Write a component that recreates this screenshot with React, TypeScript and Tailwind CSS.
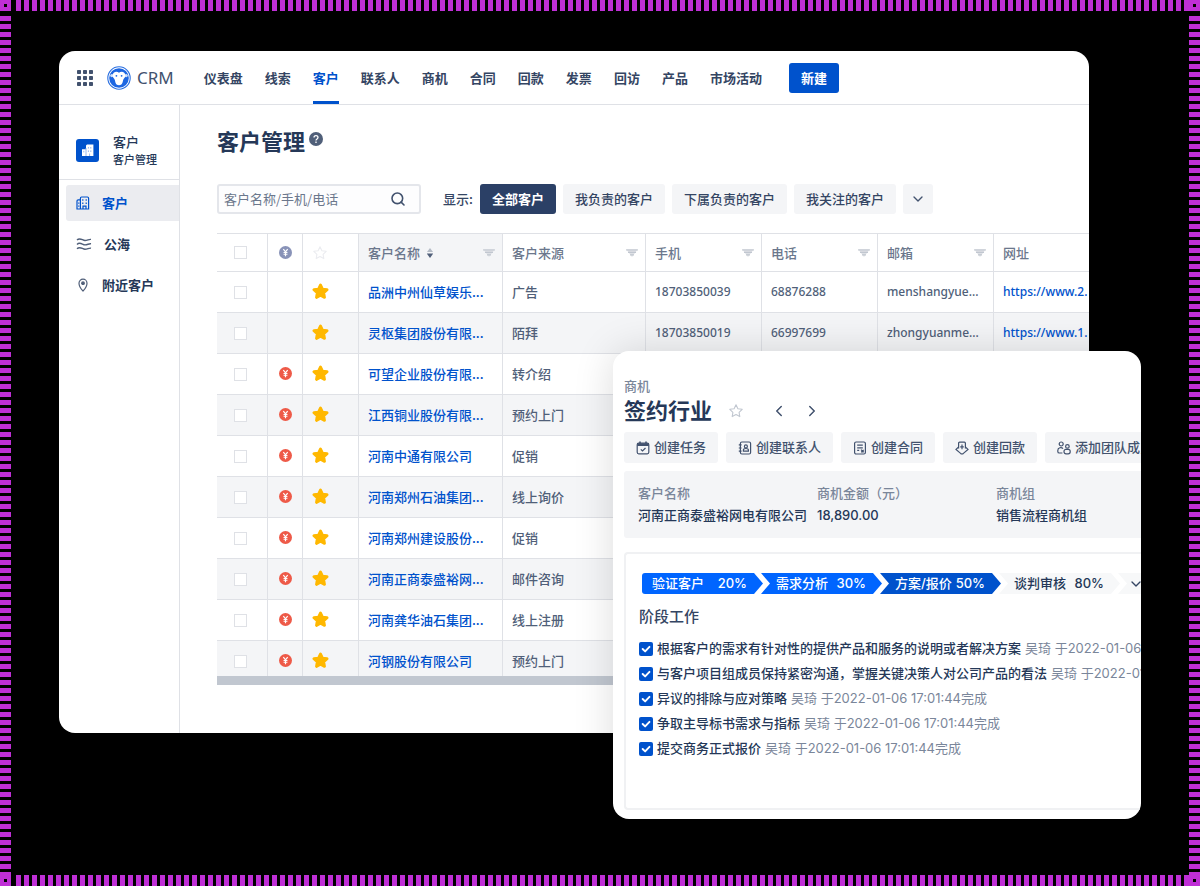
import React from "react";
import { ChevronDown, ChevronLeft, ChevronRight, Search } from "lucide-react";
import clsx from "clsx";

const navItems = ["仪表盘", "线索", "客户", "联系人", "商机", "合同", "回款", "发票", "回访", "产品", "市场活动"];

const filters = ["全部客户", "我负责的客户", "下属负责的客户", "我关注的客户"];

const customers = [
  { name: "品洲中州仙草娱乐...", source: "广告", paid: false, mobile: "18703850039", phone: "68876288", mail: "menshangyue...", site: "https://www.2." },
  { name: "灵枢集团股份有限...", source: "陌拜", paid: false, mobile: "18703850019", phone: "66997699", mail: "zhongyuanme...", site: "https://www.1." },
  { name: "可望企业股份有限...", source: "转介绍", paid: true },
  { name: "江西铜业股份有限...", source: "预约上门", paid: true },
  { name: "河南中通有限公司", source: "促销", paid: true },
  { name: "河南郑州石油集团...", source: "线上询价", paid: true },
  { name: "河南郑州建设股份...", source: "促销", paid: true },
  { name: "河南正商泰盛裕网...", source: "邮件咨询", paid: true },
  { name: "河南龚华油石集团...", source: "线上注册", paid: true },
  { name: "河钢股份有限公司", source: "预约上门", paid: true },
];

const stages = [
  { label: "验证客户", percent: "20%", className: "bg-[#0065ff] text-white" },
  { label: "需求分析", percent: "30%", className: "bg-[#0065ff] text-white" },
  { label: "方案/报价", percent: "50%", className: "bg-[#0052cc] text-white" },
  { label: "谈判审核", percent: "80%", className: "bg-[#f7f8f9] text-[#253858]" },
];

const tasks = [
  "根据客户的需求有针对性的提供产品和服务的说明或者解决方案",
  "与客户项目组成员保持紧密沟通，掌握关键决策人对公司产品的看法",
  "异议的排除与应对策略",
  "争取主导标书需求与指标",
  "提交商务正式报价",
];

const STAR = "M8 1.8l1.9 3.9 4.3.6-3.1 3 .7 4.3L8 11.6l-3.8 2 .7-4.3-3.1-3 4.3-.6z";

const Star: React.FC<{ filled?: boolean; className?: string }> = ({ filled, className }) => (
  <svg viewBox="0 0 16 16" className={clsx(filled ? "size-[17px]" : "size-4", className)}>
    <path
      d={STAR}
      fill={filled ? "#ffb800" : "none"}
      stroke={filled ? "#ffb800" : "currentColor"}
      strokeWidth={filled ? 2.6 : 1.1}
      strokeLinejoin="round"
    />
  </svg>
);

const YenBadge: React.FC<{ className?: string }> = ({ className }) => (
  <svg viewBox="0 0 12 12" className={clsx("size-[13px]", className)}>
    <circle cx="6" cy="6" r="6" fill="currentColor" />
    <path d="M4 2.8l2 2.6 2-2.6M6 5.4v4M4.2 6h3.6M4.2 7.6h3.6" fill="none" stroke="#fff" strokeWidth="1.1" />
  </svg>
);

const FilterIcon = () => (
  <svg viewBox="0 0 12 8" className="h-2 w-3">
    <path d="M0 0h12L6 8z" fill="#dfe1e6" />
    <path d="M0 1h12M2 3.4h8M4 5.8h4" stroke="#c1c7d0" strokeWidth="1.2" />
  </svg>
);

const SortIcon = () => (
  <svg viewBox="0 0 8 10" className="h-[10px] w-2">
    <path d="M4 0l3 4H1z" fill="#b3bac5" />
    <path d="M4 10l3.2-4.4H.8z" fill="#505f79" />
  </svg>
);

const Building: React.FC<{ solid?: boolean }> = ({ solid }) =>
  solid ? (
    <svg viewBox="0 0 12 12" className="size-3">
      <path d="M0 5.2h4V1.6L5 .4h6.400V12H0z" fill="#fff" />
      <path d="M4 4v8M6.4 3v1.6M8.8 3v1.6M6.4 6.4V8M8.8 6.4V8M1.8 6.8v1.6M7.6 9.6V12" stroke="#8db0ec" strokeWidth=".9" />
    </svg>
  ) : (
    <svg viewBox="0 0 14 14" className="size-[14px]" fill="none" stroke="currentColor" strokeWidth="1.2">
      <path d="M4.4 13V2.2c0-.7.4-1.200 1.200-1.200h5.800c.8 0 1.200.5 1.200 1.200V13zM4.4 3.8H2.200C1.400 3.800 1 4.300 1 5v8h3.400" />
      <path d="M6.8 3.2v1.6M10.2 3.2v1.6M6.8 6.4V8M10.2 6.4V8M2.8 6.4v1.4M2.8 9.4v1.4M7 13v-2.8h3V13" />
    </svg>
  );

const Logo = () => (
  <svg viewBox="0 0 24 24" className="size-6">
    <circle cx="12" cy="12" r="11.2" fill="#fff" stroke="#2a6fe0" strokeWidth="1.1" />
    <circle cx="12" cy="12" r="9.8" fill="#1c66e2" />
    <circle cx="4.8" cy="9.6" r="1.600" fill="#cfe0fb" />
    <circle cx="19.2" cy="9.6" r="1.600" fill="#cfe0fb" />
    <path
      d="M12 6.800c2-2.200 6.400-1.200 6.400 2.800 0 2.200-1.900 2.900-2.300 4.600-.5 2-.8 5-4.100 5s-3.600-3-4.100-5c-.4-1.700-2.300-2.400-2.300-4.600 0-4 4.400-5 6.400-2.800z"
      fill="#fff"
    />
    <circle cx="9.400" cy="9.800" r=".9" fill="#1c66e2" />
    <circle cx="14.600" cy="9.800" r=".9" fill="#1c66e2" />
  </svg>
);

const iconProps = {
  viewBox: "0 0 14 14",
  className: "size-[14px] shrink-0",
  fill: "none",
  stroke: "currentColor",
  strokeWidth: 1.2,
};

const actions = [
  {
    label: "创建任务",
    icon: (
      <svg {...iconProps}>
        <rect x="1.200" y="2.200" width="11.600" height="10.600" rx="1.500" />
        <path d="M1.200 3.600h11.600" strokeWidth="2.800" />
        <path d="M4 .6v2M10 .6v2" strokeWidth="1.600" />
        <path d="M4.800 8.400l1.700 1.600 3-3" />
      </svg>
    ),
  },
  {
    label: "创建联系人",
    icon: (
      <svg {...iconProps}>
        <rect x="2.400" y="1" width="10.200" height="12" rx="1.500" />
        <path d="M.8 3.800h2.800M.8 7h2.800M.8 10.200h2.800" />
        <circle cx="7.900" cy="5.400" r="1.500" />
        <path d="M5.400 10.200V9c0-2 5-2 5 0v1.200z" />
      </svg>
    ),
  },
  {
    label: "创建合同",
    icon: (
      <svg {...iconProps}>
        <rect x="1.600" y="1" width="10.800" height="12" rx="1.500" />
        <path d="M4.200 4.200h5.600M4.200 6.800h5.600M4.200 9.400h2M8 8.600l2.200 2.200M10.200 8.800v2H8" />
      </svg>
    ),
  },
  {
    label: "创建回款",
    icon: (
      <svg {...iconProps}>
        <path d="M3.600 7.600V2.200c0-.6.4-1 1-1h4.800c.6 0 1 .4 1 1v5.400" />
        <path d="M3.600 6L1 8.400l4.600 4c.8.600 2 .600 2.800 0l4.600-4L10.400 6M7 3.600v4.600M5.200 5.800h3.600" />
      </svg>
    ),
  },
  {
    label: "添加团队成员",
    icon: (
      <svg {...iconProps}>
        <circle cx="4.200" cy="3" r="2" />
        <circle cx="10.400" cy="5.400" r="1.800" />
        <path d="M5.400 12H2.400C1.400 12 .8 11.400.8 10.400V9.400C.8 6.400 4.600 6 6 7.600" />
        <rect x="7" y="8.400" width="6.200" height="4.400" rx="2" />
      </svg>
    ),
  },
];

const Corner = () => (
  <div className="flex size-[11px] items-center justify-center bg-[#bf2fd6]">
    <div className="size-[3px] bg-black" />
  </div>
);

const HorizontalStripes = () => (
  <div className="flex h-[11px]">
    <Corner />
    <div className="ml-[5px] flex-1 bg-[repeating-linear-gradient(90deg,#bf2fd6_0px_5px,#000_5px_8px)]" />
    <Corner />
  </div>
);

const VerticalStripes = () => (
  <div className="mt-[5px] w-[11px] bg-[repeating-linear-gradient(180deg,#bf2fd6_0px_5px,#000_5px_8px)]" />
);

const Header = () => (
  <header className="flex h-[54px] items-center border-b border-[#dfe1e6] pl-[18px]">
    <button aria-label="应用" className="text-[#42526e]">
      <svg viewBox="0 0 16 16" className="size-4" fill="currentColor">
        {[0, 6, 12].map((y) => [0, 6, 12].map((x) => <rect key={`${x}-${y}`} x={x} y={y} width="4" height="4" rx=".8" />))}
      </svg>
    </button>
    <div className="ml-[14px] flex items-center gap-[6px]">
      <Logo />
      <span className="font-['Noto_Sans',sans-serif] text-[17px] text-[#42526e]">CRM</span>
    </div>
    <nav className="ml-[30px] flex gap-[22px] self-stretch">
      {navItems.map((item) => (
        <a
          key={item}
          href="#"
          className={clsx(
            "flex items-center border-b-[3px] pt-1 font-bold",
            item === "客户" ? "border-[#0052cc] text-[#0052cc]" : "border-transparent text-[#344563]"
          )}
        >
          {item}
        </a>
      ))}
    </nav>
    <button className="ml-[27px] h-[30px] rounded-[3px] bg-[#0052cc] px-3 font-bold text-white">新建</button>
  </header>
);

const Sidebar = () => (
  <aside className="w-[121px] shrink-0 border-r border-[#dfe1e6] font-medium text-[#253858]">
    <div className="flex items-center gap-[14px] border-b border-[#dfe1e6] pt-7 pb-3 pl-[17px]">
      <span className="flex size-[23px] items-center justify-center rounded-[3px] bg-[#0052cc]">
        <Building solid />
      </span>
      <div>
        <p className="leading-[18px]">客户</p>
        <p className="text-[11px] leading-4">客户管理</p>
      </div>
    </div>
    <nav className="mt-[5px] flex flex-col gap-[5px] pl-[7px] font-bold">
      <a href="#" className="flex h-9 items-center gap-3 rounded-l-[3px] bg-[#ebecf0] pl-[10px] text-[#0052cc]">
        <Building />
        客户
      </a>
      <a href="#" className="flex h-9 items-center gap-3 pl-[10px]">
        <svg viewBox="0 0 16 14" className="h-[14px] w-4 text-[#505f79]" fill="none" stroke="currentColor" strokeWidth="1.4">
          <path d="M1 3c3-3 5.500.5 8 .5S13 2 15 2.400M1 7.400c3-3 5.500.5 8 .5s4-1.500 6-1.100M1 11.800c3-3 5.500.5 8 .5s4-1.500 6-1.100" />
        </svg>
        公海
      </a>
      <a href="#" className="flex h-9 items-center gap-3 pl-[10px]">
        <svg viewBox="0 0 14 14" className="size-[14px] text-[#505f79]" fill="none" stroke="currentColor" strokeWidth="1.2">
          <path d="M7 13C4.600 10.600 3 8 3 5.200a4 4 0 018 0C11 8 9.400 10.600 7 13z" />
          <circle cx="7" cy="5.200" r="1.300" fill="currentColor" />
        </svg>
        附近客户
      </a>
    </nav>
  </aside>
);

const Toolbar = () => (
  <div className="mt-[29px] flex items-center">
    <label className="flex h-[30px] w-[204px] items-center rounded-[3px] border-2 border-[#e4e6eb] bg-[#fdfdfe] pr-[13px] pl-[5px]">
      <input
        aria-label="搜索客户"
        placeholder="客户名称/手机/电话"
        className="min-w-0 flex-1 bg-transparent outline-none placeholder:text-[#6b778c]"
      />
      <Search className="size-4 text-[#42526e]" strokeWidth={2.4} />
    </label>
    <span className="mr-[7px] ml-[22px] font-medium text-[#344563]">显示:</span>
    <div className="flex gap-[7px]">
      {filters.map((filter, i) => (
        <button
          key={filter}
          className={clsx(
            "h-[30px] rounded-[3px] px-3",
            i === 0 ? "bg-[#2b4066] font-bold text-white" : "bg-[#f4f5f7] font-medium text-[#344563]"
          )}
        >
          {filter}
        </button>
      ))}
      <button aria-label="更多" className="flex h-[30px] w-[30px] items-center justify-center rounded-[3px] bg-[#f4f5f7]">
        <ChevronDown className="size-4 text-[#42526e]" strokeWidth={2} />
      </button>
    </div>
  </div>
);

const headCell = "h-[38px] border-r border-b border-[#dfe1e6] px-[9px] text-left font-medium text-[#6b778c]";
const cell = "h-[41px] border-r border-b border-[#dfe1e6] px-[9px] font-medium text-[#505f79]";
const latinCell = clsx(cell, "font-['Noto_Sans',sans-serif] text-xs");
const checkbox = "block size-[13px] appearance-none border border-[#dfe1e6] bg-white";

const HeadLabel: React.FC<{ text: string; sort?: boolean }> = ({ text, sort }) => (
  <div className="-mr-[2px] flex items-center gap-[6px]">
    {text}
    {sort && <SortIcon />}
    <span className="ml-auto">
      <FilterIcon />
    </span>
  </div>
);

const CustomerTable = () => (
  <div className="mt-[19px] overflow-hidden border-t border-[#dfe1e6]">
    <table className="w-[916px] table-fixed border-separate border-spacing-0">
      <colgroup>
        <col className="w-[51px]" />
        <col className="w-[35px]" />
        <col className="w-[56px]" />
        <col className="w-[144px]" />
        <col className="w-[143px]" />
        <col className="w-[116px]" />
        <col className="w-[116px]" />
        <col className="w-[116px]" />
        <col />
      </colgroup>
      <thead>
        <tr>
          <th className={headCell}>
            <input type="checkbox" aria-label="全选" className={clsx(checkbox, "ml-2")} />
          </th>
          <th className={headCell}>
            <YenBadge className="mx-auto text-[#8993b8]" />
          </th>
          <th className={headCell}>
            <Star className="text-[#ebecf0]" />
          </th>
          <th className={clsx(headCell, "bg-[#f4f5f7]")}>
            <HeadLabel text="客户名称" sort />
          </th>
          {["客户来源", "手机", "电话", "邮箱", "网址"].map((text) => (
            <th key={text} className={headCell}>
              <HeadLabel text={text} />
            </th>
          ))}
        </tr>
      </thead>
      <tbody>
        {customers.map((row) => (
          <tr key={row.name} className="even:bg-[#f4f5f7]">
            <td className={cell}>
              <input type="checkbox" aria-label={row.name} className={clsx(checkbox, "ml-2")} />
            </td>
            <td className={clsx(cell, "pb-[2px]")}>{row.paid && <YenBadge className="mx-auto text-[#ee5a48]" />}</td>
            <td className={clsx(cell, "pb-[2px]")}>
              <Star filled />
            </td>
            <td className={cell}>
              <a href="#" className="whitespace-nowrap text-[#0052cc]">
                {row.name}
              </a>
            </td>
            <td className={cell}>{row.source}</td>
            <td className={latinCell}>{row.mobile}</td>
            <td className={latinCell}>{row.phone}</td>
            <td className={latinCell}>{row.mail}</td>
            <td className={latinCell}>
              {row.site && (
                <a href="#" className="text-[#0052cc]">
                  {row.site}
                </a>
              )}
            </td>
          </tr>
        ))}
      </tbody>
    </table>
    <div className="relative -mt-[6px] h-[9px] bg-[#c1c7d0]" />
  </div>
);

const Pipeline = () => (
  <ol className="flex h-[21px] overflow-hidden rounded-l-[3px] leading-[21px] font-medium">
    {stages.map((stage, i) => (
      <li
        key={stage.label}
        className={clsx(
          "flex w-[121px] shrink-0 justify-between pr-4 whitespace-nowrap",
          i === 0
            ? "pl-[10px] [clip-path:polygon(0_0,calc(100%_-_9px)_0,100%_50%,calc(100%_-_9px)_100%,0_100%)]"
            : "-ml-[2px] pl-[15px] [clip-path:polygon(0_0,calc(100%_-_9px)_0,100%_50%,calc(100%_-_9px)_100%,0_100%,9px_50%)]",
          stage.className
        )}
      >
        <span>{stage.label}</span>
        <span>{stage.percent}</span>
      </li>
    ))}
    <li className="-ml-[2px] flex w-[60px] shrink-0 items-center bg-[#f7f8f9] pl-[10px] [clip-path:polygon(0_0,100%_0,100%_100%,0_100%,9px_50%)]">
      <ChevronDown className="size-4 text-[#344563]" strokeWidth={2} />
    </li>
  </ol>
);

const DealPanel = () => (
  <section className="absolute top-[340px] right-12 left-[calc(50%+13px)] overflow-hidden rounded-2xl bg-white pt-[26px] pb-[9px] pl-[11px] font-['Inter','Noto_Sans_CJK_SC',sans-serif] whitespace-nowrap shadow-[0_0_40px_rgba(0,0,0,0.14)]">
    <p className="leading-[18px] font-medium text-[#7a869a]">商机</p>
    <div className="flex h-8 items-center">
      <h2 className="text-[22px] font-bold text-[#253858]">签约行业</h2>
      <Star className="ml-4 text-[#c1c7d0]" />
      <button aria-label="上一个" className="ml-[26px] text-[#42526e]">
        <ChevronLeft className="size-[18px]" strokeWidth={2} />
      </button>
      <button aria-label="下一个" className="ml-[15px] text-[#42526e]">
        <ChevronRight className="size-[18px]" strokeWidth={2} />
      </button>
    </div>
    <div className="mt-[5px] flex gap-2">
      {actions.map((action) => (
        <button
          key={action.label}
          className="flex h-[31px] shrink-0 items-center gap-1 rounded-[3px] bg-[#f4f5f7] px-3 font-medium text-[#42526e]"
        >
          {action.icon}
          {action.label}
        </button>
      ))}
    </div>
    <dl className="mt-2 grid grid-cols-[179px_179px_1fr] rounded-l-[3px] bg-[#f4f5f7] pt-[11px] pb-3 pl-[14px] leading-[22px] font-medium">
      <div>
        <dt className="text-[#7a869a]">客户名称</dt>
        <dd className="text-[#253858]">河南正商泰盛裕网电有限公司</dd>
      </div>
      <div>
        <dt className="text-[#7a869a]">商机金额（元）</dt>
        <dd className="text-[#253858]">18,890.00</dd>
      </div>
      <div>
        <dt className="text-[#7a869a]">商机组</dt>
        <dd className="text-[#253858]">销售流程商机组</dd>
      </div>
    </dl>
    <div className="mt-[14px] rounded-l-[4px] border-2 border-r-0 border-[#f0f1f3] pt-[19px] pb-[47px] pl-[13px]">
      <div className="pl-[3px]">
        <Pipeline />
      </div>
      <h3 className="mt-3 mb-2 text-[15px] leading-[22px] font-medium text-[#344563]">阶段工作</h3>
      <ul>
        {tasks.map((task) => (
          <li key={task}>
            <label className="flex h-[25px] items-center gap-1">
              <span className="relative flex">
                <input type="checkbox" defaultChecked className="size-[14px] appearance-none rounded-[2px] bg-[#0052cc]" />
                <svg viewBox="0 0 13 13" className="pointer-events-none absolute inset-0" fill="none" stroke="#fff" strokeWidth="1.8">
                  <path d="M3.400 6.500l2.300 2.200 4-4.200" strokeLinecap="round" strokeLinejoin="round" />
                </svg>
              </span>
              <span className="font-medium text-[#253858]">{task}</span>
              <span className="text-[#7a869a]">吴琦 于2022-01-06 17:01:44完成</span>
            </label>
          </li>
        ))}
      </ul>
    </div>
  </section>
);

const App = () => (
  <div className="flex min-h-screen flex-col bg-black">
    <HorizontalStripes />
    <div className="flex flex-1">
      <VerticalStripes />
      <main className="relative min-w-0 flex-1 pt-10 pr-[100px] pb-[142px] pl-12 font-['Noto_Sans_CJK_SC',sans-serif] text-[13px]">
        <div className="overflow-hidden rounded-2xl bg-white">
          <Header />
          <div className="flex">
            <Sidebar />
            <div className="min-w-0 flex-1 pt-5 pb-12 pl-[37px]">
              <div className="flex h-[30px] items-center gap-1">
                <h1 className="text-[22px] font-bold text-[#253858]">客户管理</h1>
                <svg viewBox="0 0 14 14" className="mb-[2px] size-[14px]">
                  <circle cx="7" cy="7" r="7" fill="#505f79" />
                  <path d="M5 5.600c0-2.700 4-2.700 4 0C9 7 7 6.900 7 8.400M7 9.600v1.400" fill="none" stroke="#fff" strokeWidth="1.300" />
                </svg>
              </div>
              <Toolbar />
              <CustomerTable />
            </div>
          </div>
        </div>
        <DealPanel />
      </main>
      <VerticalStripes />
    </div>
    <HorizontalStripes />
  </div>
);

export default App;
